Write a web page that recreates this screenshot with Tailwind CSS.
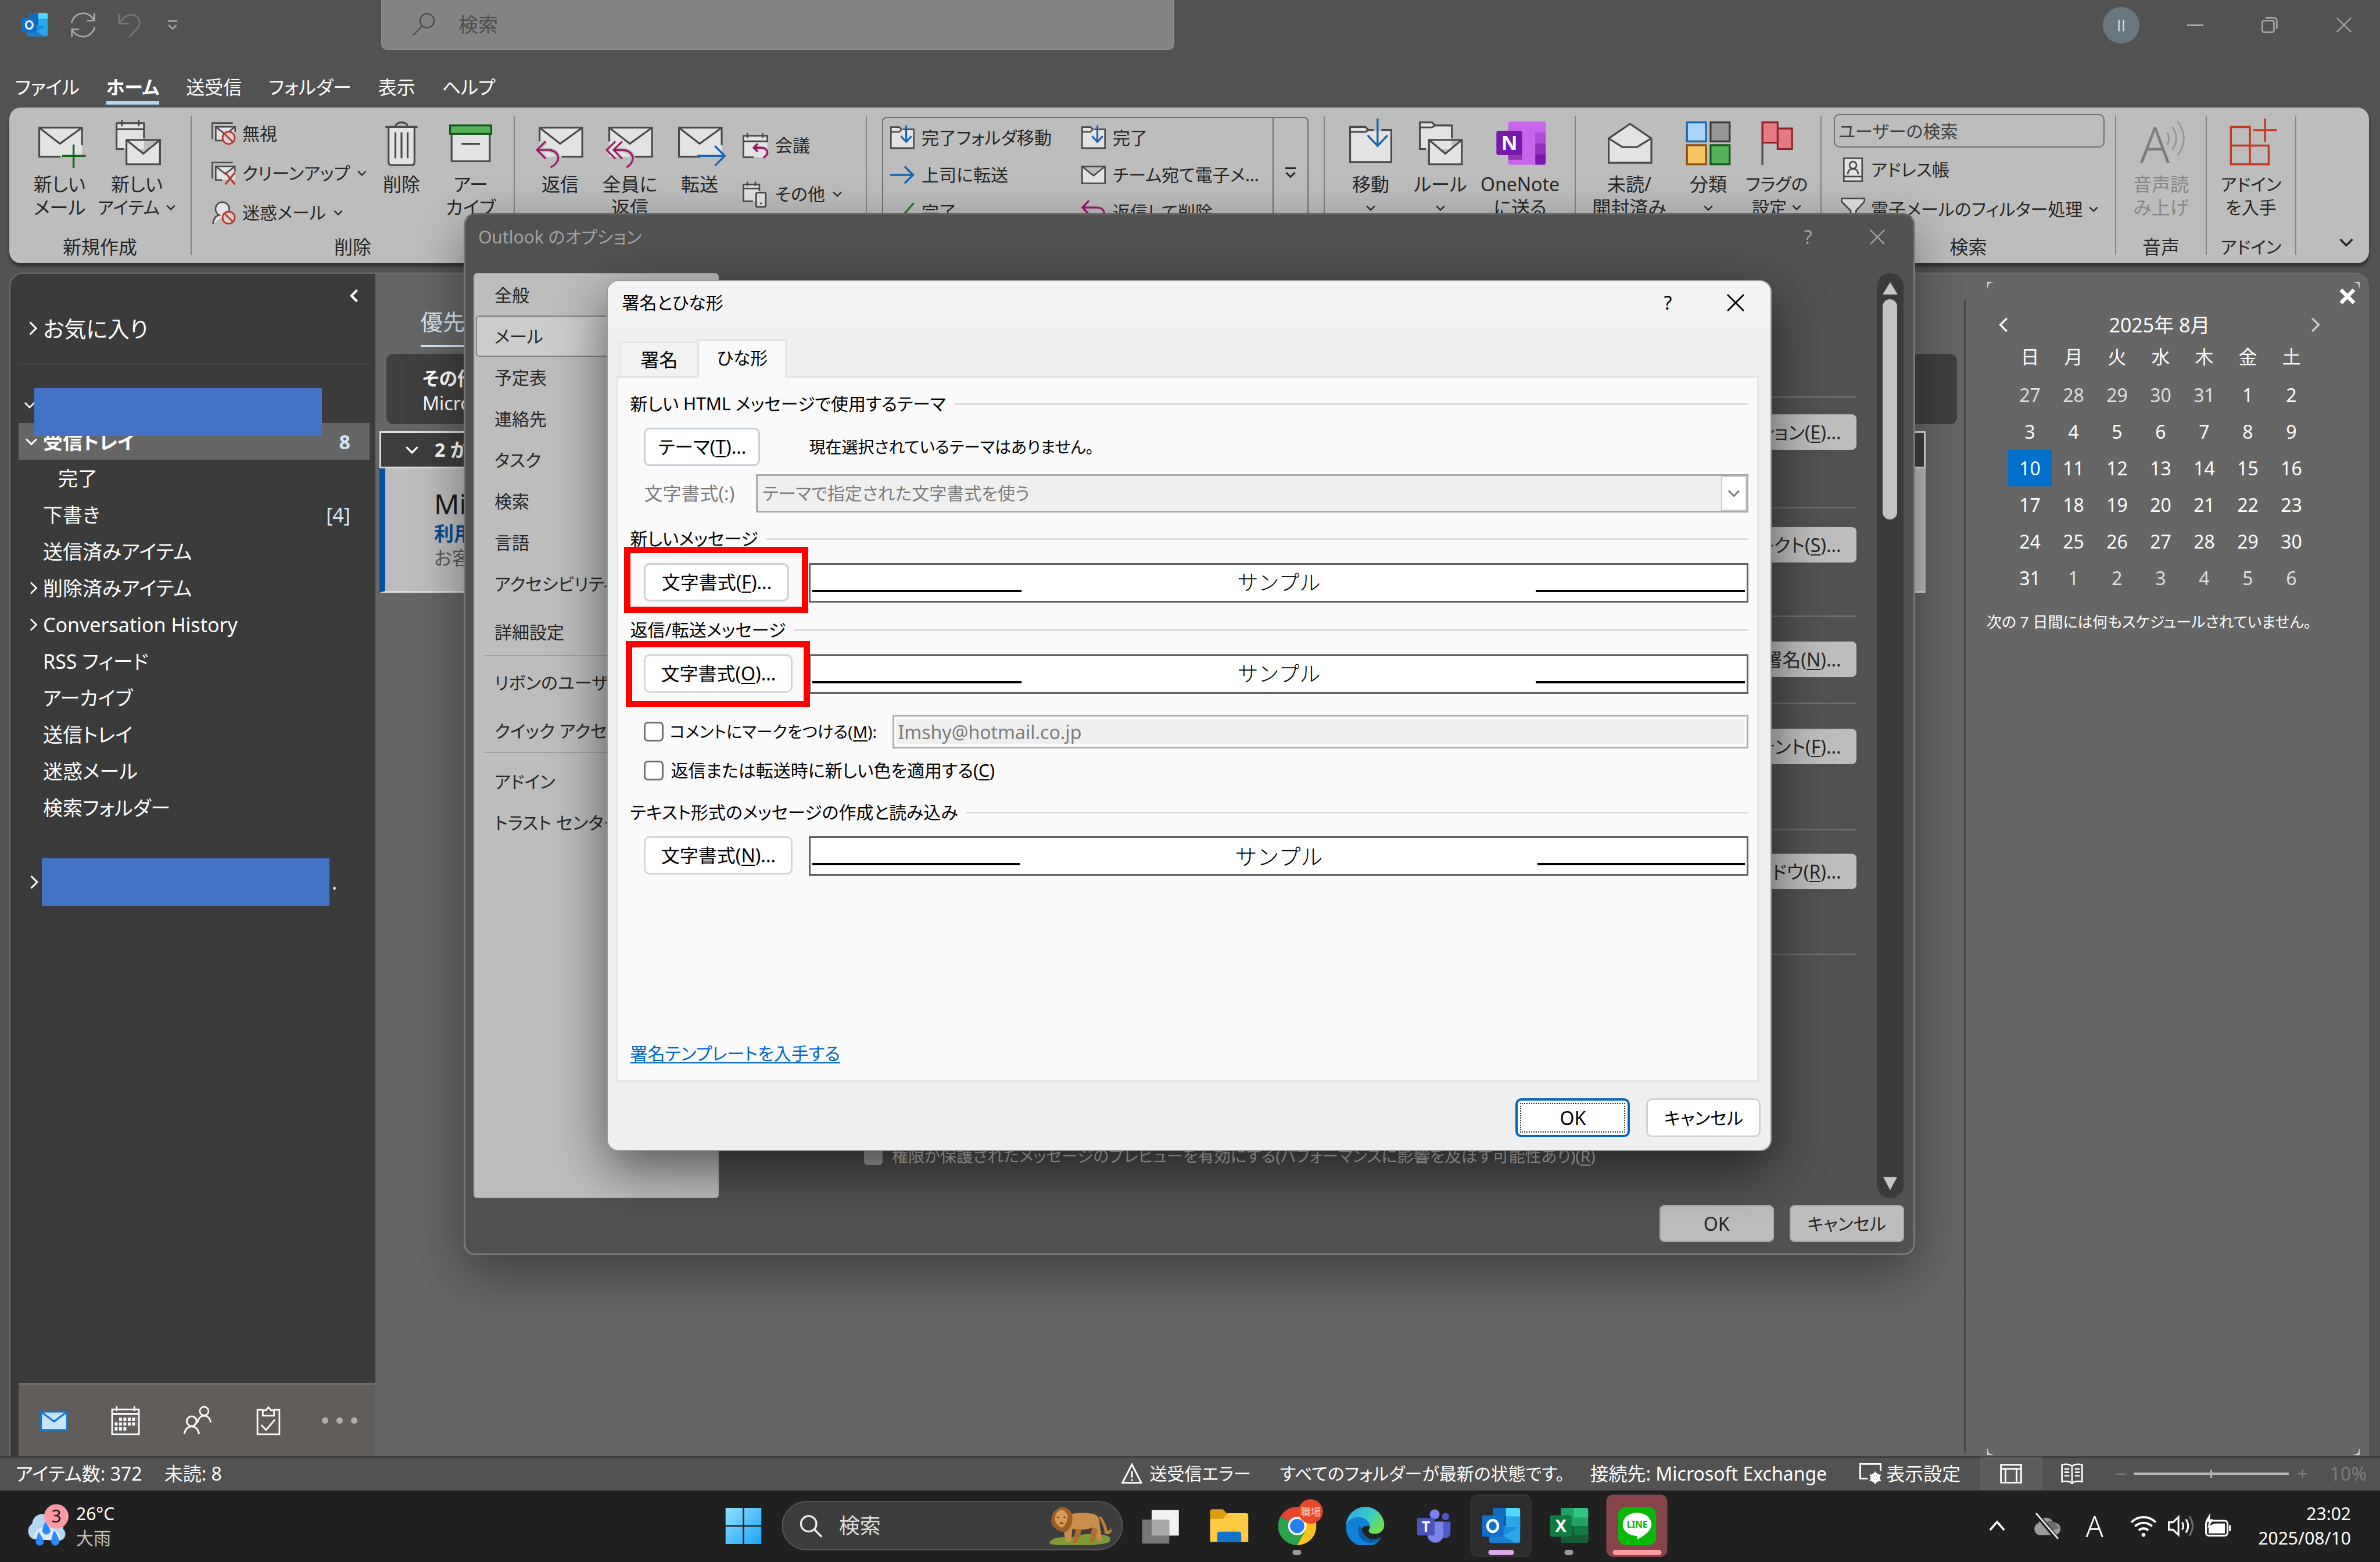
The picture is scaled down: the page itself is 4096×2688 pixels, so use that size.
<!DOCTYPE html>
<html lang="ja">
<head>
    <meta charset="UTF-8">
    <meta name="viewport" content="width=device-width, initial-scale=1.0">
    <title>受信トレイ - Outlook</title>
    <script src="https://cdn.jsdelivr.net/npm/@tailwindcss/browser@4"></script>
    <style>
        body { font-feature-settings: "palt"; }
        button, label, a, span, p { white-space: nowrap; }
        u { text-underline-offset: 4px; text-decoration-thickness: 2px; }
    </style>
</head>
<body class="relative flex min-h-screen flex-col overflow-hidden bg-[#525252] font-['Noto_Sans','Noto_Sans_CJK_JP',sans-serif] text-[32px] leading-[40px] text-[#262626]">

    <!-- Icon sprite -->
    <svg class="hidden" xmlns="http://www.w3.org/2000/svg">
        <symbol id="i-chev-down" viewBox="0 0 16 16"><path d="M2 5l6 6 6-6" fill="none" stroke="currentColor" stroke-width="2"/></symbol>
        <symbol id="i-chev-right" viewBox="0 0 16 16"><path d="M5 1l7 7-7 7" fill="none" stroke="currentColor" stroke-width="2"/></symbol>
        <symbol id="i-chev-left" viewBox="0 0 16 16"><path d="M11 1L4 8l7 7" fill="none" stroke="currentColor" stroke-width="2"/></symbol>
        <symbol id="i-close" viewBox="0 0 16 16"><path d="M1 1l14 14M15 1L1 15" fill="none" stroke="currentColor" stroke-width="1.4"/></symbol>
        <symbol id="i-more" viewBox="0 0 16 16"><path d="M2 3h12M3 8l5 5 5-5" fill="none" stroke="currentColor" stroke-width="2"/></symbol>
        <symbol id="i-env" viewBox="0 0 32 32" overflow="visible"><path d="M2.5 6h28v19h-28z" fill="#e3e3e3"/><path d="M16.5 25h-14V6h28v11.5M2.5 6L16 16.5 30.5 6" fill="none" stroke="#4a4a4a" stroke-width="1.2"/></symbol>
        <symbol id="i-env-r" viewBox="0 0 32 32" overflow="visible"><path d="M2.5 6h28v19h-28z" fill="#e3e3e3"/><path d="M17 25h13.500V6h-28v9M2.500 6L16 16.500 30.500 6" fill="none" stroke="#4a4a4a" stroke-width="1.2"/></symbol>
        <symbol id="i-ban" viewBox="0 0 10 10"><circle cx="5" cy="5" r="4.200" fill="#d9d0cf" stroke="#b8352c" stroke-width="1.100"/><path d="M2 2l6 6" stroke="#b8352c" stroke-width="1.100"/></symbol>
        <symbol id="i-msgs" viewBox="0 0 16 16"><path d="M.5 11.500V1H14" fill="none" stroke="#4a4a4a"/><path d="M2.800 3.500h12.700v9H2.800z" fill="#e3e3e3"/><path d="M7 12.500H2.800v-9h12.700V7M2.800 3.500l6.300 5 6.400-5" fill="none" stroke="#4a4a4a"/></symbol>
        <symbol id="i-movequick" viewBox="0 0 16 16" overflow="visible"><path d="M.5 1H6l1.500 2h8v12H.5z" fill="#e3e3e3"/><path d="M8.500 2.500H15.500V14.800H.5V1H6l1.500 1.500L6 4.200H.5" fill="none" stroke="#4a4a4a"/><path d="M10.500-.500V10.500M7 7l3.500 3.700L14 7" fill="none" stroke="#1765b3" stroke-width="1.200"/></symbol>
        <symbol id="i-outlook" viewBox="0 0 32 32"><path d="M9 1h21a2 2 0 012 2v25a2 2 0 01-2 2H9z" fill="#1490df"/><path d="M9 1h12v14H9z" fill="#0f6cbd"/><path d="M20 1h10a2 2 0 012 2v12H20z" fill="#50d9ff"/><path d="M9 8h12v8H9z" fill="#0a5aa8"/><path d="M20 8h12v9H20z" fill="#28a8ea"/><path d="M6 16l13 8 13-8v12a2 2 0 01-2 2H8a2 2 0 01-2-2z" fill="#28a8ea"/><path d="M6 17l22 13H8a2 2 0 01-2-2z" fill="#1b7fd1"/><rect x="0" y="7" width="18" height="18" rx="1.500" fill="#0f6fc9"/><ellipse cx="9" cy="16" rx="4.300" ry="4.800" fill="none" stroke="#fff" stroke-width="2.200"/></symbol>
        <symbol id="i-person" viewBox="0 0 16 16"><circle cx="8" cy="5" r="4" fill="none" stroke="currentColor" stroke-width="1.400"/><path d="M2 15.500C2.500 11.500 5 9.200 8 9.200s5.500 2.300 6 6.300" fill="none" stroke="currentColor" stroke-width="1.400"/></symbol>
    </svg>

    <!-- Title bar -->
    <header class="flex h-[86px] items-center text-[#a8a8a8]">
        <svg class="ml-[38px] size-[44px]"><use href="#i-outlook"/></svg>
        <button class="ml-[38px]" aria-label="更新"><svg class="size-[46px]" viewBox="0 0 18 18" fill="none" stroke="currentColor" stroke-width="1.100"><path d="M1.200 7.800A8 8 0 0116.200 5.500M16.600 1v5h-5M16.800 10.200A8 8 0 011.800 12.500M1.400 17v-5h5"/></svg></button>
        <button class="ml-[34px] text-[#777777]" aria-label="元に戻す"><svg class="size-[44px]" viewBox="0 0 18 18" fill="none" stroke="currentColor" stroke-width="1.100"><path d="M2 1v7h7M2.300 7.500C5 3.500 8 1.500 11.500 1.800c5 .600 6.500 6.200 3 10L9 17.500"/></svg></button>
        <button class="ml-[42px]" aria-label="クイック アクセス"><svg class="size-[22px]"><use href="#i-more"/></svg></button>
        <label class="ml-[348px] flex h-full w-[1365px] items-center rounded-b-[10px] border-2 border-t-0 border-[#8d8d8d] bg-[#838383] pl-[52px] text-[#4e4e4e]">
            <svg class="size-[40px]" viewBox="0 0 16 16" fill="none" stroke="currentColor" stroke-width="1"><circle cx="10" cy="5.500" r="4.800"/><path d="M6.500 9L.5 15.500"/></svg>
            <input class="ml-[39px] w-[800px] bg-transparent text-[34px] outline-none placeholder:text-[#4e4e4e]" type="text" placeholder="検索">
        </label>
        <div class="ml-auto flex items-center pr-[48px]">
            <span class="flex size-[63px] items-center justify-center rounded-full bg-[#69777f] font-['Open_Sans',sans-serif] text-[28px] text-[#dddddd]">II</span>
            <button class="ml-[82px] h-[28px] w-[28px]" aria-label="最小化"><span class="block h-[3px] bg-[#a8a8a8]"></span></button>
            <button class="ml-[100px]" aria-label="元のサイズに戻す"><svg class="size-[28px]" viewBox="0 0 12 12" fill="none" stroke="currentColor" stroke-width="1.100"><rect x=".6" y="2.800" width="8.600" height="8.600" rx="1.400"/><path d="M3 .7h6a2.300 2.300 0 012.300 2.300v6"/></svg></button>
            <button class="ml-[100px]" aria-label="閉じる"><svg class="size-[28px]"><use href="#i-close"/></svg></button>
        </div>
    </header>

    <!-- Ribbon tabs -->
    <nav class="flex h-[99px] items-start gap-[46px] pt-[42px] pl-[26px] leading-[44px] text-white">
        <a href="#">ファイル</a>
        <a href="#" class="border-b-[6px] border-[#b3d6f2] pb-0.5 font-bold">ホーム</a>
        <a href="#">送受信</a>
        <a href="#">フォルダー</a>
        <a href="#">表示</a>
        <a href="#">ヘルプ</a>
    </nav>

    <!-- Ribbon -->
    <section class="mr-[19px] ml-[16px] flex h-[268px] rounded-[20px] bg-[#bdbdbd] py-[14px] shadow-[0_5px_5px_rgba(0,0,0,0.45)]">
        <div class="flex w-[314px] flex-col border-r-2 border-[#858585]">
            <div class="flex h-[206px] shrink-0 justify-center pt-[5px] pr-[6px]">
                <button class="flex w-[133px] flex-col items-center"><svg class="mb-[9px] size-[84px]" viewBox="0 0 32 32" overflow="visible"><use href="#i-env"/><path d="M25 17v15.500M17.500 24.500H33" stroke="#12691a" stroke-width="1.300"/></svg><span>新しい<br>メール</span></button>
                <button class="flex w-[133px] flex-col items-center"><svg class="mb-[9px] size-[84px]" viewBox="0 0 32 32"><path d="M2.500 3h18v17h-18z" fill="#e3e3e3"/><path d="M7.500 20h-5V3h18v10M2.500 7h18M6 1v4M17 1v4" fill="none" stroke="#4a4a4a" stroke-width="1.200"/><path d="M9 14h22v16H9zl11 9 11-9" fill="#e3e3e3" stroke="#4a4a4a" stroke-width="1.200"/></svg><span>新しい</span><span class="flex items-center gap-[10px] text-[30px]">アイテム<svg class="size-[18px]"><use href="#i-chev-down"/></svg></span></button>
            </div>
            <span class="text-center">新規作成</span>
        </div>
        <div class="flex w-[556px] flex-col border-r-2 border-[#858585]">
            <div class="flex h-[206px] shrink-0 pl-[34px]">
                <div class="-mt-[3px] flex w-[268px] flex-col text-[30px] *:flex *:h-[68px] *:items-center">
                    <button><svg class="mr-[11px] size-[42px]" viewBox="0 0 16 16"><use href="#i-msgs"/><use href="#i-ban" x="6.500" y="6" width="9.500" height="9.500"/></svg>無視</button>
                    <button><svg class="mr-[11px] size-[42px]" viewBox="0 0 16 16"><use href="#i-msgs"/><path d="M9 7.500l6.500 8M15.500 7.500L9 15.500" stroke="#b8352c" stroke-width="1.200"/></svg>クリーンアップ<svg class="ml-[12px] size-[18px]"><use href="#i-chev-down"/></svg></button>
                    <button><svg class="mr-[11px] size-[42px]" viewBox="0 0 16 16"><path d="M1 15.500c.300-4 2-5.500 4-6A4.500 4.500 0 117.800 10" fill="#e3e3e3" stroke="#4a4a4a"/><use href="#i-ban" x="6.500" y="6.500" width="9.500" height="9.500"/></svg>迷惑メール<svg class="ml-[12px] size-[18px]"><use href="#i-chev-down"/></svg></button>
                </div>
                <button class="flex w-[118px] flex-col items-center pt-[5px]"><svg class="mb-[9px] size-[84px]" viewBox="0 0 32 32" fill="none" stroke="#4a4a4a" stroke-width="1.200"><path d="M7.500 6v22.500q0 2 2 2h13q2 0 2-2V6" fill="#e3e3e3"/><path d="M5.500 5.500h21M12 5.500c0-4 8-4 8 0M12 9v17M16 9v17M20 9v17"/></svg>削除</button>
                <button class="flex w-[120px] flex-col items-center pt-[5px]"><svg class="mb-[9px] size-[84px]" viewBox="0 0 32 32" stroke-width="1.200"><path d="M3.500 10h25v18h-25z" fill="#e3e3e3" stroke="#4a4a4a"/><path d="M2.500 4.500h27V10h-27z" fill="#55b256" stroke="#12571a"/><path d="M10 16.600h12" stroke="#4a4a4a"/></svg><span>アー<br>カイブ</span></button>
            </div>
            <span class="text-center">削除</span>
        </div>
        <div class="flex w-[606px] border-r-2 border-[#858585] pt-[5px] pl-[18px]">
            <button class="flex w-[120px] flex-col items-center"><svg class="mb-[9px] size-[84px]" viewBox="0 0 32 32" overflow="visible"><use href="#i-env-r"/><path d="M6.500 15L.8 20.600l5.700 5.700M.8 20.600H8c6 0 10 6 1.800 11.400" fill="none" stroke="#bdbdbd" stroke-width="3"/><path d="M6.500 15L.8 20.600l5.700 5.700M.8 20.600H8c7 0 10 7 1.800 11.400" fill="none" stroke="#9c1865" stroke-width="1.200"/></svg>返信</button>
            <button class="flex w-[120px] flex-col items-center"><svg class="mb-[9px] size-[84px]" viewBox="0 0 32 32" overflow="visible"><use href="#i-env-r"/><path d="M5.300 20.600H11c7 0 10 7 2.800 11.400" fill="none" stroke="#bdbdbd" stroke-width="3"/><path d="M6.500 15L.8 20.600l5.700 5.700M11 15l-5.700 5.600L11 26.300M5.300 20.600H11c7 0 10 7 2.800 11.400" fill="none" stroke="#9c1865" stroke-width="1.200"/></svg><span>全員に<br>返信</span></button>
            <button class="flex w-[120px] flex-col items-center"><svg class="mb-[9px] size-[84px]" viewBox="0 0 32 32" overflow="visible"><use href="#i-env"/><path d="M14.500 24.500H32M26 18l6.500 6.500L26 31" fill="none" stroke="#1765b3" stroke-width="1.300"/></svg>転送</button>
            <div class="ml-[14px] flex flex-col pt-[4px] text-[30px] *:flex *:h-[84px] *:items-center">
                <button><svg class="mr-[12px] size-[44px]" viewBox="0 0 16 16" overflow="visible"><path d="M.5 2h15v13.500H.5z" fill="#e3e3e3"/><path d="M7 15.500H.5V2h15v4M.5 5.500h15M3 .3V3.500M12.500.3V3.500" fill="none" stroke="#4a4a4a"/><path d="M9.500 7L7 9.500 9.500 12M7 9.500h4c5 0 6 4 2 6.200" fill="none" stroke="#9c1865" stroke-width="1.300"/></svg>会議</button>
                <button><svg class="mr-[12px] size-[44px]" viewBox="0 0 16 16" overflow="visible"><path d="M.5 2h10v10.500H.5z" fill="#e3e3e3"/><path d="M6.500 12.500h-6V2h10v4M.5 4.500h10M3 .3V3M8 .3V3" fill="none" stroke="#4a4a4a"/><rect x="8.500" y="7" width="6" height="9" rx=".8" fill="#e3e3e3" stroke="#4a4a4a"/><circle cx="11.500" cy="13.800" r=".6" fill="#4a4a4a"/></svg>その他<svg class="ml-[12px] size-[18px]"><use href="#i-chev-down"/></svg></button>
            </div>
        </div>
        <div class="flex w-[788px] border-r-2 border-[#858585] px-[26px] pt-[2px]">
            <div class="flex flex-1 overflow-hidden rounded-[8px] border-2 border-[#707070]">
                <div class="grid flex-1 grid-cols-2 content-start gap-y-[1px] overflow-hidden border-r-2 border-[#707070] pt-[2px] pl-[12px] text-[30px] *:flex *:h-[63px] *:items-center">
                    <button><svg class="mr-[12px] size-[42px]"><use href="#i-movequick"/></svg>完了フォルダ移動</button>
                    <button><svg class="mr-[12px] size-[42px]"><use href="#i-movequick"/></svg>完了</button>
                    <button><svg class="mr-[12px] size-[42px]" viewBox="0 0 16 16" fill="none" stroke="#1765b3" stroke-width="1.300"><path d="M0 8h15M9.500 2.500L15 8l-5.500 5.500"/></svg>上司に転送</button>
                    <button><svg class="mr-[12px] size-[42px] shrink-0" viewBox="0 0 16 16"><path d="M.5 2.500h15v11H.5zl7.500 6 7.500-6" fill="#e3e3e3" stroke="#4a4a4a"/></svg>チーム宛て電子メ…</button>
                    <button><svg class="mr-[12px] size-[42px]" viewBox="0 0 16 16" fill="none" stroke="#2c7a2c" stroke-width="1.300"><path d="M0 9l5 5L15.500 2"/></svg>完了</button>
                    <button><svg class="mr-[12px] size-[42px]" viewBox="0 0 16 16" fill="none" stroke="#9c1865" stroke-width="1.300"><path d="M5 .5L.8 5 5 9.500M.8 5H10c7 0 6 8 1 10"/></svg>返信して削除</button>
                </div>
                <button class="flex w-[58px] justify-center pt-[82px]" aria-label="クイック操作"><svg class="size-[24px]"><use href="#i-more"/></svg></button>
            </div>
        </div>
        <div class="flex w-[432px] border-r-2 border-[#858585] pt-[5px] pl-[19px]">
            <button class="flex w-[120px] flex-col items-center"><svg class="mb-[9px] size-[84px]" viewBox="0 0 32 32"><path d="M2.500 5.500H13L15 8h14.500v20.500h-27z" fill="#e3e3e3"/><path d="M18 7.500h-3.500l-2-2h-10v23h27v-21H23M2.500 8.700h10l2-1.200" fill="none" stroke="#4a4a4a" stroke-width="1.200"/><path d="M20.500 0v18M14 11l6.500 7 6.500-7" fill="none" stroke="#1765b3" stroke-width="1.300"/></svg>移動<svg class="mt-[12px] size-[18px]"><use href="#i-chev-down"/></svg></button>
            <button class="flex w-[120px] flex-col items-center"><svg class="mb-[9px] size-[84px]" viewBox="0 0 32 32"><path d="M2.500 2.500h8l2 2h11V20h-21z" fill="#e3e3e3"/><path d="M6.500 20h-4V2.500h8l2 2h11V13M2.500 5.800h8l2-1.300" fill="none" stroke="#4a4a4a" stroke-width="1.200"/><path d="M8.500 14h21.500v16H8.500zl10.700 9L30 14" fill="#e3e3e3" stroke="#4a4a4a" stroke-width="1.200"/></svg>ルール<svg class="mt-[12px] size-[18px]"><use href="#i-chev-down"/></svg></button>
            <button class="flex w-[154px] flex-col items-center"><svg class="mb-[9px] size-[84px]" viewBox="0 0 32 32" overflow="visible"><rect x="8.300" y="2" width="24.500" height="28.300" rx="1.500" fill="#c965eb"/><path d="M26 9h6.800v7.200H26z" fill="#ae4bd5"/><path d="M26 16.200h6.800v7.100H26z" fill="#9332bf"/><path d="M26 23.300h6.800v5.500q0 1.500-1.500 1.500H26z" fill="#7719aa"/><path d="M8.300 23h9v4h-9z" fill="#8e3bb0"/><rect x=".5" y="8" width="16.800" height="16" rx="1.500" fill="#7719aa"/><text x="9" y="20.500" text-anchor="middle" font-size="13" font-weight="700" fill="#fff">N</text></svg><span>OneNote<br>に送る</span></button>
        </div>
        <div class="flex w-[423px] border-r-2 border-[#858585] pt-[5px] pl-[12px]">
            <button class="flex w-[160px] flex-col items-center"><svg class="mb-[9px] size-[84px]" viewBox="0 0 32 32" fill="#e3e3e3" stroke="#4a4a4a" stroke-width="1.200"><path d="M2.500 13v16h28V13L16.500 3.500z"/><path d="M2.500 13l9 5.700h9.500l9.500-5.700" fill="none"/></svg><span>未読/<br>開封済み</span></button>
            <button class="flex w-[112px] flex-col items-center"><svg class="mb-[9px] size-[84px]" viewBox="0 0 32 32" stroke-width="1.200"><path d="M2 2.500h12.500V15H2z" fill="#a9d5fa" stroke="#1765b3"/><path d="M17.500 2.500H30V15H17.500z" fill="#969696" stroke="#3a3a3a"/><path d="M2 17.500h12.500V30H2z" fill="#f7c464" stroke="#8a4a14"/><path d="M17.500 17.500H30V30H17.500z" fill="#55b256" stroke="#12571a"/></svg>分類<svg class="mt-[12px] size-[18px]"><use href="#i-chev-down"/></svg></button>
            <button class="flex w-[124px] flex-col items-center"><svg class="mb-[9px] size-[84px]" viewBox="0 0 32 32"><path d="M6.500 16v14.500" stroke="#4a4a4a" stroke-width="1.200"/><path d="M6.500 2.500h10v13.300h-10zM16.500 6.500H26V20h-9.500z" fill="#e37b80" stroke="#8e2226" stroke-width="1.200"/></svg><span class="text-[30px]">フラグの</span><span class="flex items-center gap-[8px] text-[30px]">設定<svg class="size-[18px]"><use href="#i-chev-down"/></svg></span></button>
        </div>
        <div class="flex w-[507px] flex-col border-r-2 border-[#858585]">
            <div class="flex h-[206px] shrink-0 flex-col pr-[18px] pl-[21px] text-[30px]">
                <input class="-mt-[3px] h-[58px] w-full shrink-0 rounded-[10px] border-2 border-[#707070] pl-[6px] text-[#404040] outline-none placeholder:text-[#404040]" type="text" placeholder="ユーザーの検索" aria-label="ユーザーの検索">
                <button class="flex h-[72px] items-center pt-[4px] pl-[12px]"><svg class="mr-[10px] size-[42px]" viewBox="0 0 16 16" fill="#e3e3e3" stroke="#4a4a4a"><path d="M2 .5h12v15H2zM2 12.500h12"/><circle cx="8" cy="5" r="2.300"/><path d="M4.500 11c.3-2.500 1.500-3.600 3.500-3.600s3.200 1.100 3.500 3.600" fill="none"/></svg>アドレス帳</button>
                <button class="flex h-[68px] items-center pl-[12px]"><svg class="mr-[10px] size-[42px] shrink-0" viewBox="0 0 16 16" fill="#e3e3e3" stroke="#4a4a4a"><path d="M.5 1h15v2L10 9v6.500H6.500V9L.5 3z"/></svg>電子メールのフィルター処理<svg class="ml-[10px] size-[18px] shrink-0"><use href="#i-chev-down"/></svg></button>
            </div>
            <span class="text-center">検索</span>
        </div>
        <div class="flex w-[156px] flex-col border-r-2 border-[#858585]">
            <button class="flex h-[206px] shrink-0 flex-col items-center pt-[5px] text-[#878787]"><svg class="mb-[9px] size-[84px]" viewBox="0 0 32 32" overflow="visible"><text x="12" y="29" text-anchor="middle" font-size="32" font-weight="300" fill="#7b7b7b">A</text><path d="M20 9q2.500 4 0 8M23.500 5.500q5 7.500 0 15M27 2q8 11 0 22" fill="none" stroke="#969696" stroke-width="1.100"/></svg><span>音声読<br>み上げ</span></button>
            <span class="text-center">音声</span>
        </div>
        <div class="flex w-[154px] flex-col border-r-2 border-[#858585]">
            <button class="flex h-[206px] shrink-0 flex-col items-center pt-[5px]"><svg class="mb-[9px] size-[84px]" viewBox="0 0 32 32" overflow="visible" fill="none" stroke="#c3391f" stroke-width="1.300"><path d="M2.800 5.500h12.500V30H2.800zM2.800 17.700h24.800V30H15.300M25.200 0v15.500M17.500 7.600H33M27.600 17.700V30"/></svg><span class="text-[30px]">アドイン<br>を入手</span></button>
            <span class="text-center text-[30px]">アドイン</span>
        </div>
        <button class="mt-auto ml-auto pr-[25px] pb-[8px]" aria-label="リボンを折りたたむ"><svg class="size-[28px]"><use href="#i-chev-down"/></svg></button>
    </section>

    <!-- Folder pane, message list and calendar -->
    <main class="mt-[16px] mr-[19px] ml-[16px] flex flex-1 overflow-hidden rounded-t-[24px] border-t-2 border-l-2 border-[#6e6e6e] bg-[#666666] text-white">
        <aside class="flex w-[628px] flex-col bg-[#3b3b3b] text-[34px]">
            <div class="flex justify-end pt-[27px] pr-[26px]"><button aria-label="折りたたむ"><svg class="size-[22px]" viewBox="0 0 16 16"><path d="M12 1L5 8l7 7" fill="none" stroke="currentColor" stroke-width="3"/></svg></button></div>
            <a href="#" class="mt-[20px] ml-[26px] flex h-[50px] items-center gap-[6px] text-[38px]"><svg class="size-[24px]"><use href="#i-chev-right"/></svg>お気に入り</a>
            <div class="mt-[35px] mr-[10px] ml-[14px] border-t-2 border-[#454545]"></div>
            <ul class="mt-[38px] mr-[10px] ml-[14px] *:flex *:h-[63px] *:items-center">
                <li class="relative"><svg class="ml-[8px] size-[22px]"><use href="#i-chev-down"/></svg><span class="absolute top-[3px] left-[27px] h-[82px] w-[495px] bg-[#4472c7]"></span></li>
                <li class="bg-[#666666] pr-[33px] font-bold"><svg class="mr-[8px] ml-[10px] size-[24px]"><use href="#i-chev-down"/></svg>受信トレイ<span class="ml-auto text-[#d3e6f5]">8</span></li>
                <li class="pl-[68px]">完了</li>
                <li class="pr-[33px] pl-[42px]">下書き<span class="ml-auto text-[#d3e6f5]">[4]</span></li>
                <li class="pl-[42px]">送信済みアイテム</li>
                <li><svg class="mr-[6px] ml-[14px] size-[22px]"><use href="#i-chev-right"/></svg>削除済みアイテム</li>
                <li><svg class="mr-[6px] ml-[14px] size-[22px]"><use href="#i-chev-right"/></svg>Conversation History</li>
                <li class="pl-[42px]">RSS フィード</li>
                <li class="pl-[42px]">アーカイブ</li>
                <li class="pl-[42px]">送信トレイ</li>
                <li class="pl-[42px]">迷惑メール</li>
                <li class="pl-[42px]">検索フォルダー</li>
            </ul>
            <div class="mt-[56px] ml-[28px] flex h-[82px] items-center"><svg class="size-[24px]"><use href="#i-chev-right"/></svg><span class="ml-[2px] h-full w-[495px] bg-[#4472c7]"></span><span class="ml-[4px]">.</span></div>
            <div class="mt-auto ml-[14px] flex h-[126px] items-center border-t-[3px] border-[#6e6e6e] bg-[#605d5b] *:flex *:w-[123px] *:justify-center">
                <button aria-label="メール"><svg class="h-[36px] w-[48px]" viewBox="0 0 18 13"><path d="M.6.600h16.800v11.800H.6z" fill="#c9e3f7" stroke="#1277cf" stroke-width="1.200"/><path d="M1 1l8 6 8-6" fill="none" stroke="#1277cf" stroke-width="1.200"/></svg></button>
                <button aria-label="予定表"><svg class="size-[50px]" viewBox="0 0 18 18" fill="none" stroke="#fff" stroke-width="1"><path d="M.7 2h16.600v15.300H.7zM.7 4.800h16.600M3.500 0v3M14.500 0v3"/><path d="M5 8h11M2.300 11h13.700M2.300 14h8" stroke-width="2" stroke-dasharray="1.800 .9"/></svg></button>
                <button aria-label="連絡先"><svg class="size-[52px]" viewBox="0 0 20 20"><use href="#i-person" x="9" y="0" width="11.500" height="11.500"/><use href="#i-person" x="0" y="6" width="13" height="13.500"/></svg></button>
                <button aria-label="タスク"><svg class="h-[50px] w-[42px]" viewBox="0 0 15 18" fill="none" stroke="#fff" stroke-width="1"><path d="M4 2.200H.7v15.100h13.600V2.200H11M4 5.800V2.500h2L7.500.600 9 2.500h2v3.300zM3 11.500l3 3.200 5.500-6.500"/></svg></button>
                <button class="gap-[14px]" aria-label="その他"><i class="size-[11px] rounded-full bg-[#adadad]"></i><i class="size-[11px] rounded-full bg-[#adadad]"></i><i class="size-[11px] rounded-full bg-[#adadad]"></i></button>
            </div>
        </aside>

        <section class="flex flex-1 flex-col pr-[12px] pl-[7px]">
            <div class="mt-[57px] ml-[71px] flex"><a href="#" class="border-b-[3px] border-[#d3e6f5] pb-[16px] text-[38px] leading-[50px] text-[#d3e6f5]">優先</a></div>
            <div class="mt-[12px] ml-[12px] h-[121px] rounded-[12px] bg-[#404040] pt-[20px] pl-[62px] leading-[43px]"><p class="font-bold">その他</p><p>Microsoft</p></div>
            <div class="mt-[12px] mr-[54px] flex h-[64px] items-center border-[3px] border-[#dcdcdc] bg-[#3e3e3e] font-bold"><svg class="mr-[26px] ml-[40px] size-[26px]"><use href="#i-chev-down"/></svg>2 か月前</div>
            <article class="mr-[54px] h-[214px] border-b-[3px] border-l-[10px] border-[#dcdcdc] border-l-[#0550a0] bg-[#bdbdbd] pt-[31px] pl-[84px]">
                <p class="text-[48px] leading-[60px] text-[#1a1a1a]">Microsoft</p>
                <p class="text-[34px] leading-[42px] font-bold text-[#064a94]">利用規約</p>
                <p class="text-[32px] leading-[42px] text-[#5a5a5a]">お客様</p>
            </article>
        </section>

        <!-- To-do bar calendar -->
        <section class="relative mt-[46px] mb-[6px] w-[697px] border-l-[3px] border-[#484848]">
            <svg class="absolute -top-[32px] left-[37px] size-[12px]" viewBox="0 0 12 12"><path d="M0 0h12L3 3 0 12z" fill="#cfcfcf"/></svg>
            <svg class="absolute -top-[32px] right-[16px] size-[12px]" viewBox="0 0 12 12"><path d="M12 0H0l9 3 3 9z" fill="#cfcfcf"/></svg>
            <svg class="absolute -bottom-[4px] left-[37px] size-[12px]" viewBox="0 0 12 12"><path d="M0 12h12L3 9 0 0z" fill="#cfcfcf"/></svg>
            <svg class="absolute -bottom-[4px] right-[16px] size-[12px]" viewBox="0 0 12 12"><path d="M12 12H0l9-3 3-9z" fill="#cfcfcf"/></svg>
            <button class="absolute -top-[22px] right-[22px]" aria-label="閉じる"><svg class="size-[30px]" viewBox="0 0 16 16"><path d="M2 2l12 12M14 2L2 14" stroke="#fff" stroke-width="3.500"/></svg></button>
            <div class="flex items-center justify-between pt-[22px] pr-[80px] pl-[53px] text-[34px]">
                <button aria-label="前の月"><svg class="size-[26px]"><use href="#i-chev-left"/></svg></button>
                <span>2025年 8月</span>
                <button aria-label="次の月"><svg class="size-[26px] text-[#cfcfcf]"><use href="#i-chev-right"/></svg></button>
            </div>
            <table class="ml-[73px] w-[525px] table-fixed text-center">
                <thead><tr class="h-[69px] *:font-normal"><th>日</th><th>月</th><th>火</th><th>水</th><th>木</th><th>金</th><th>土</th></tr></thead>
                <tbody class="*:h-[63px]">
                    <tr><td class="text-[#dedede]">27</td><td class="text-[#dedede]">28</td><td class="text-[#dedede]">29</td><td class="text-[#dedede]">30</td><td class="text-[#dedede]">31</td><td>1</td><td>2</td></tr>
                    <tr><td>3</td><td>4</td><td>5</td><td>6</td><td>7</td><td>8</td><td>9</td></tr>
                    <tr><td class="bg-[#0070cc]">10</td><td>11</td><td>12</td><td>13</td><td>14</td><td>15</td><td>16</td></tr>
                    <tr><td>17</td><td>18</td><td>19</td><td>20</td><td>21</td><td>22</td><td>23</td></tr>
                    <tr><td>24</td><td>25</td><td>26</td><td>27</td><td>28</td><td>29</td><td>30</td></tr>
                    <tr><td>31</td><td class="text-[#dedede]">1</td><td class="text-[#dedede]">2</td><td class="text-[#dedede]">3</td><td class="text-[#dedede]">4</td><td class="text-[#dedede]">5</td><td class="text-[#dedede]">6</td></tr>
                </tbody>
            </table>
            <p class="mt-[24px] ml-[36px] text-[26px]">次の 7 日間には何もスケジュールされていません。</p>
        </section>
    </main>

    <!-- Status bar -->
    <footer class="flex h-[59px] items-center border-t-[3px] border-[#3e3e3e] pr-[23px] pb-[3px] pl-[27px] text-white">
        <span>アイテム数: 372</span><span class="ml-[38px]">未読: 8</span>
        <div class="ml-auto flex h-[56px] items-center">
            <svg class="mr-[12px] size-[36px]" viewBox="0 0 16 16" fill="none" stroke="#fff" stroke-width="1.300"><path d="M8 1L.8 15h14.400zM8 6v5M8 12.200v1.500"/></svg><span class="text-[30px]">送受信エラー</span>
            <span class="ml-[50px] text-[30px]">すべてのフォルダーが最新の状態です。</span>
            <span class="ml-[44px]">接続先: Microsoft Exchange</span>
            <button class="ml-[56px] flex items-center"><svg class="mr-[8px] size-[38px]" viewBox="0 0 16 16" fill="none" stroke="#fff" stroke-width="1.200"><path d="M6 11.500H.6V1h14.800v5"/><circle cx="11.500" cy="11" r="2.600" stroke-width="1.800"/><path d="M11.500 6.500v9M7.600 8.800l7.800 4.400M15.400 8.800l-7.800 4.400"/></svg>表示設定</button>
            <button class="ml-[34px] flex h-full w-[106px] items-center justify-center bg-[#5d5d5d]" aria-label="標準"><svg class="size-[38px]" viewBox="0 0 16 16" fill="none" stroke="#fff" stroke-width="1.200"><path d="M.7 1.500h14.600v13H.7zM.7 4.500h14.600M4 4.500v10M12 4.500v10"/></svg></button>
            <button class="ml-[33px]" aria-label="閲覧"><svg class="size-[38px]" viewBox="0 0 16 16" fill="none" stroke="#fff" stroke-width="1.100"><path d="M8 2.500C6 1 3 1 .7 1.500v12.300C3 13.300 6 13.300 8 15c2-1.700 5-1.700 7.300-1.200V1.500C13 1 10 1 8 2.500V15M2.500 4.500h3.500M2.500 7h3.500M2.500 9.500h3.500M10 4.500h3.500M10 7h3.500M10 9.500h3.500"/></svg></button>
            <span class="ml-[55px] text-[#7c7c7c]">−</span>
            <input class="mx-[14px] h-[20px] w-[267px] appearance-none bg-transparent [&::-webkit-slider-runnable-track]:h-[4px] [&::-webkit-slider-runnable-track]:bg-[#b5b5b5] [&::-webkit-slider-thumb]:-mt-[5px] [&::-webkit-slider-thumb]:h-[14px] [&::-webkit-slider-thumb]:w-[3px] [&::-webkit-slider-thumb]:appearance-none [&::-webkit-slider-thumb]:bg-[#b5b5b5]" type="range" value="50" aria-label="ズーム">
            <span class="text-[#7c7c7c]">+</span>
            <span class="ml-[38px] text-[#7c7c7c]">10%</span>
        </div>
    </footer>

    <!-- Windows taskbar -->
    <footer class="relative flex h-[123px] items-center bg-[#202020] pb-[2px] text-white">
        <div class="ml-[45px] flex items-center">
            <svg class="size-[76px]" viewBox="0 0 30 30"><path d="M5 24a6 6 0 01-1-10.500A7 7 0 0116 9a6.500 6.500 0 019 8 4.500 4.500 0 01-3 8z" fill="#b5d6f3"/><path d="M5 24c0-6 4-9 10-8s9 4 8 9z" fill="#dbeafa"/><path d="M13 12q3.500 5 3.500 6.500a2.800 2.800 0 01-5.500 0Q11 16 13 12zM8.500 19q3.500 5 3.500 7a2.800 2.800 0 01-5.500 0q0-2 2-7zM19 18q3.500 5 3.500 8a2.800 2.800 0 01-5.500 0q0-3 2-8z" fill="#2a8bff"/><circle cx="20.500" cy="8.500" r="8.300" fill="#ff99a4"/><text x="20.500" y="12.800" text-anchor="middle" font-size="12" fill="#1a1a1a">3</text></svg>
            <div class="ml-[10px] text-[30px] leading-[42px]"><p>26°C</p><p class="text-[#c4c4c4]">大雨</p></div>
        </div>
        <div class="absolute left-[50.35%] flex -translate-x-1/2 items-center">
            <button class="mr-[35px]" aria-label="スタート"><svg class="size-[62px]" viewBox="0 0 24 24"><defs><linearGradient id="win" x1="0" y1="0" x2="1" y2="1"><stop offset="0" stop-color="#8fe0ff"/><stop offset="1" stop-color="#1aa4f7"/></linearGradient></defs><path d="M0 0h11.500v11.500H0zM12.500 0H24v11.500H12.500zM0 12.500h11.500V24H0zM12.500 12.500H24V24H12.500z" fill="url(#win)"/></svg></button>
            <label class="mr-[7px] flex h-[85px] w-[587px] items-center rounded-full border-2 border-[#555555] bg-[#3d3d3d] pl-[28px]">
                <svg class="size-[40px]" viewBox="0 0 16 16" fill="none" stroke="#e8e8e8" stroke-width="1.400"><circle cx="6.500" cy="6.500" r="5.300"/><path d="M10.500 10.500l5 5"/></svg>
                <input class="ml-[28px] w-[340px] bg-transparent text-[36px] outline-none placeholder:text-[#dddddd]" type="text" placeholder="検索">
                <svg class="ml-[18px] h-[66px] w-[114px] shrink-0" viewBox="0 0 114 66"><path d="M4 62q6-12 40-10 20-8 50-4 20 2 14 12-10 6-50 6-50 2-54-4z" fill="#7f9a35"/><path d="M34 14q22-6 46-2 12 4 11 18l4 28h-8l-7-22q-18 6-36 2l-2 22h-9l-6-28z" fill="#c98d4c"/><path d="M50 38l-6 24h8l9-24zM78 34l-4 26h8l6-20z" fill="#ab6f35"/><path d="M26 0q16 2 18 16 2 18-12 28-18-2-24-16Q6 6 26 0z" fill="#9a5f22"/><path d="M24 5q11 2 12 12-1 14-10 19-9-3-12-13 0-14 10-18z" fill="#d69b58"/><path d="M18 18h3M29 18h3M23 28h5" stroke="#4a2a10" stroke-width="2"/><path d="M90 18q8 14 10 28 6 4 12-4l-2-6q-2 8-6 4-3-14-11-24z" fill="#c07f35"/></svg>
            </label>
            <div class="flex *:relative *:flex *:h-[107px] *:w-[117px] *:items-center *:justify-center">
                <button aria-label="タスク ビュー"><svg class="size-[66px]" viewBox="0 0 24 24"><path d="M6 2h17v16H6z" fill="#f2f2f2"/><path d="M0 8h17v15H0z" fill="#777777"/><path d="M6 8h11v10H6z" fill="#a8a8a8"/></svg></button>
                <button aria-label="エクスプローラー"><svg class="size-[66px]" viewBox="0 0 24 24"><path d="M0 3q0-1.500 1.500-1.500H8L10.500 4v4H0z" fill="#dc9c12"/><path d="M0 7.500h8L11 4h11.500Q24 4 24 5.500V22H0z" fill="#ffcb45"/><path d="M4.500 22v-5q0-1.500 1.500-1.500h12q1.500 0 1.500 1.500v5z" fill="#1173c7"/></svg></button>
                <button aria-label="Chrome"><svg class="size-[66px]" viewBox="0 0 48 48"><path d="M24 24L3.200 12A24 24 0 0144.800 12z" fill="#e8452f"/><path d="M3.200 12A24 24 0 0024 48l10.400-18L24 24z" fill="#2ba24c"/><path d="M44.800 12A24 24 0 0124 48l10.400-18L24 12z" fill="#fcc31e"/><path d="M24 13h21.300L24 12z" fill="#e8452f"/><circle cx="24" cy="24" r="11.500" fill="#fff"/><circle cx="24" cy="24" r="9" fill="#2a7df0"/></svg><span class="absolute top-[8px] right-[14px] flex size-[42px] items-center justify-center rounded-full bg-[#e64a2b] text-[17px] leading-none text-[#ffd3c8]">職場</span><i class="absolute bottom-[3px] h-[9px] w-[15px] rounded-full bg-[#9c9c9c]"></i></button>
                <button aria-label="Edge"><svg class="size-[66px]" viewBox="0 0 48 48"><defs><linearGradient id="edg" x1="0" y1="0" x2="1" y2=".6"><stop offset="0" stop-color="#2aa8e8"/><stop offset=".6" stop-color="#3ccbc5"/><stop offset="1" stop-color="#6fe04a"/></linearGradient></defs><path d="M24 0a24 24 0 0124 22c0 8-6 12-12 12s-9-3-7-6c3-5-1-12-9-12C11 16 3 20 0 25A24 24 0 0124 0z" fill="url(#edg)"/><path d="M0 25c0-7 8-13 18-12 7 1 13 7 12 12-10-4-14 6-8 13 5 6 14 6 22 1A24 24 0 010 25z" fill="#1182d8"/><path d="M17 23c-5 10 2 22 15 22 6-1 10-4 12-7-7 4-16 3-20-2-4-4-4-9-7-13z" fill="#0c59a4"/></svg></button>
                <button aria-label="Teams"><svg class="size-[60px]" viewBox="0 0 24 24"><circle cx="13" cy="4" r="3.400" fill="#7b83eb"/><circle cx="20.500" cy="5.500" r="2.500" fill="#5059c9"/><path d="M17 9h7v8a4 4 0 01-7 2z" fill="#5059c9"/><path d="M8 9h11v9a5.500 5.500 0 01-11 0z" fill="#7b83eb"/><rect x="1" y="6.500" width="12" height="12" rx="1" fill="#4b53bc"/><text x="7" y="16" text-anchor="middle" font-size="10" font-weight="700" fill="#fff">T</text></svg></button>
                <button aria-label="Outlook"><span class="absolute inset-x-[6px] inset-y-0 rounded-[12px] border-2 border-[#343434] bg-[#2c2c2c]"></span><svg class="relative size-[66px]"><use href="#i-outlook"/></svg><i class="absolute bottom-[3px] h-[9px] w-[44px] rounded-full bg-[#dfa8ea]"></i></button>
                <button aria-label="Excel"><svg class="size-[66px]" viewBox="0 0 32 32"><path d="M9 1h21q2 0 2 2v25q0 2-2 2H11q-2 0-2-2z" fill="#21a366"/><path d="M20 1h10q2 0 2 2v6H20z" fill="#33c481"/><path d="M9 16h12v14H11q-2 0-2-2z" fill="#185c37"/><path d="M20 16h12v7H20z" fill="#107c41"/><path d="M20 23h12v5q0 2-2 2H20z" fill="#185c37"/><rect x="0" y="7" width="18" height="18" rx="1.500" fill="#107c41"/><text x="9" y="20.800" text-anchor="middle" font-size="14" font-weight="700" fill="#fff">X</text></svg><i class="absolute bottom-[3px] h-[9px] w-[15px] rounded-full bg-[#9c9c9c]"></i></button>
                <button aria-label="LINE"><span class="absolute inset-x-[6px] inset-y-0 rounded-[12px] bg-[#85454b]"></span><svg class="relative size-[66px]" viewBox="0 0 32 32"><rect width="32" height="32" rx="7" fill="#06b906"/><path d="M16 5c7 0 12 4.300 12 9.800 0 5-5.500 9-12 12.500.3-2 .5-3-1-3C8 23.500 4 19.600 4 14.800 4 9.300 9 5 16 5z" fill="#fff"/><text x="16" y="17.600" text-anchor="middle" font-size="7.500" font-weight="700" fill="#06b906">LINE</text></svg><i class="absolute bottom-[3px] h-[9px] w-[84px] rounded-full bg-[#ff99a4]"></i></button>
            </div>
        </div>
        <div class="ml-auto flex items-center pr-[50px]">
            <svg class="size-[28px]" viewBox="0 0 16 16"><path d="M1 12l7-8 7 8" fill="none" stroke="#fff" stroke-width="2"/></svg>
            <svg class="ml-[47px] size-[48px]" viewBox="0 0 24 24"><path d="M6 20a5.500 5.500 0 01-1-10.500A7 7 0 0118 9a5.500 5.500 0 011 11z" fill="#9b9b9b"/><path d="M11 11q3-6 8-2l4 5-7 2z" fill="#6c6c6c"/><path d="M3 1l18 22" stroke="#202020" stroke-width="4"/><path d="M3 1l19 22" stroke="#e8e8e8" stroke-width="1.400"/></svg>
            <span class="ml-[44px] text-[50px] font-light">A</span>
            <svg class="ml-[46px] size-[46px]" viewBox="0 0 18 18" fill="none" stroke="#fff" stroke-width="1.500"><path d="M.8 6.500a11.500 11.500 0 0116.400 0M3.300 9.300a8 8 0 0111.400 0M5.800 12a4.500 4.500 0 016.400 0"/><circle cx="9" cy="15" r="1.300" fill="#fff" stroke="none"/></svg>
            <svg class="ml-[18px] size-[46px]" viewBox="0 0 18 18" fill="none" stroke="#fff" stroke-width="1.200"><path d="M1 6.500h2.800L7.500 3v12l-3.700-3.500H1zM10 6.500q1.500 2.500 0 5M12.500 4.500q3 4.500 0 9"/><path d="M14.800 2.500q4.500 6.500 0 13" stroke="#6e6e6e"/></svg>
            <svg class="ml-[18px] size-[46px]" viewBox="0 0 18 18"><rect x="1" y="5.500" width="14.500" height="10" rx="2" fill="none" stroke="#fff" stroke-width="1.200"/><path d="M2.800 14V9l4-1.700h6.900V14z" fill="#fff"/><path d="M16.500 8.500h1.200v4h-1.200zM4 0L.5 6H3l-1 5 4-6.500H3.600z" fill="#fff"/></svg>
            <div class="ml-[40px] w-[166px] text-right text-[30px] leading-[42px]"><p>23:02</p><p>2025/08/10</p></div>
        </div>
    </footer>

    <!-- Outlook options window -->
    <div class="absolute top-[367px] left-[19.48%] flex h-[1793px] w-[60.98%] flex-col rounded-[20px] border-[3px] border-[#7a7a7a] border-t-[#606060] bg-[#515151] shadow-[0_30px_90px_rgba(0,0,0,0.4)]">
        <div class="flex h-[100px] items-center pr-[48px] pb-[24px] pl-[22px] text-[#a3a3a3]">
            <span class="text-[30px]">Outlook のオプション</span>
            <button class="ml-auto" aria-label="ヘルプ">?</button>
            <button class="ml-[98px]" aria-label="閉じる"><svg class="size-[28px]"><use href="#i-close"/></svg></button>
        </div>
        <div class="flex h-[1592px]">
            <nav class="ml-[14px] flex w-[422px] flex-col rounded-[6px] border-2 border-[#b0b0b0] bg-[#bdbdbd] text-[30px] *:flex *:h-[71px] *:shrink-0 *:items-center *:pl-[34px]">
                <a href="#">全般</a>
                <a href="#" class="ml-[2px] rounded-[6px] border-2 border-[#808080] bg-[#cbcccb] pl-[30px]!">メール</a>
                <a href="#">予定表</a>
                <a href="#">連絡先</a>
                <a href="#">タスク</a>
                <a href="#">検索</a>
                <a href="#">言語</a>
                <a href="#">アクセシビリティ</a>
                <a href="#" class="mt-[12px]">詳細設定</a>
                <hr class="mx-[16px] mt-[4px] h-[2px]! border-[#808080]">
                <a href="#" class="mt-[10px]">リボンのユーザー設定</a>
                <a href="#" class="mt-[12px]">クイック アクセス ツール バー</a>
                <hr class="mx-[16px] mt-[2px] h-[2px]! border-[#808080]">
                <a href="#" class="mt-[12px]">アドイン</a>
                <a href="#">トラスト センター</a>
            </nav>
            <div class="ml-[40px] flex flex-1 flex-col pt-[212px] pr-[35px] text-[#262626] *:flex *:items-start *:justify-end *:border-t-[3px] *:border-[#6c6c6c]">
                <div class="h-[190px] pt-[28px]"><button class="h-[61px] rounded-[8px] bg-[#bdbdbd] px-[26px]">編集オプション(<u>E</u>)...</button></div>
                <div class="h-[187px] pt-[32px]"><button class="h-[61px] rounded-[8px] bg-[#bdbdbd] px-[26px]">スペル チェックとオートコレクト(<u>S</u>)...</button></div>
                <div class="h-[150px] pt-[42px]"><button class="h-[61px] rounded-[8px] bg-[#bdbdbd] px-[26px]">署名(<u>N</u>)...</button></div>
                <div class="h-[217px] pt-[42px]"><button class="h-[61px] rounded-[8px] bg-[#bdbdbd] px-[26px]">ひな形およびフォント(<u>F</u>)...</button></div>
                <div class="h-[215px] pt-[40px]"><button class="h-[61px] rounded-[8px] bg-[#bdbdbd] px-[26px]">閲覧ウィンドウ(<u>R</u>)...</button></div>
                <div class="justify-start! pt-[325px] pl-[210px] text-[28px] text-[#c4c4c4]"><label class="flex items-center gap-[16px]"><input class="size-[32px] shrink-0 appearance-none rounded-[6px] bg-[#a3a3a3]" type="checkbox"><span>権限が保護されたメッセージのプレビューを有効にする(パフォーマンスに影響を及ぼす可能性あり)(<u>R</u>)</span></label></div>
            </div>
            <div class="mr-[17px] flex w-[46px] flex-col items-center rounded-full bg-[#3b3b3b] py-[14px]">
                <svg class="size-[26px]" viewBox="0 0 16 16"><path d="M8 1l8 13H0z" fill="#c6c6c6"/></svg>
                <div class="mt-[5px] h-[379px] w-[25px] rounded-full bg-[#c3c3c3]"></div>
                <svg class="mt-auto size-[24px]" viewBox="0 0 16 16"><path d="M8 16L0 1h16z" fill="#c6c6c6"/></svg>
            </div>
        </div>
        <div class="flex justify-end gap-[27px] pt-[12px] pr-[16px] *:h-[63px] *:w-[197px] *:rounded-[8px] *:border-2 *:border-[#a8a8a8] *:bg-[#bdbdbd]">
            <button>OK</button>
            <button class="text-[30px]">キャンセル</button>
        </div>
    </div>

    <!-- Signatures and stationery window -->
    <div class="absolute top-[482px] left-[25.5%] flex h-[1499px] w-[48.95%] flex-col rounded-[20px] border-2 border-[#9a9a9a] bg-[#efefef] text-black shadow-[0_30px_90px_rgba(0,0,0,0.55)]">
        <div class="flex h-[78px] items-center rounded-t-[18px] bg-[#f3f3f3] pr-[44px] pb-[4px] pl-[24px]">
            <span class="text-[30px]">署名とひな形</span>
            <button class="ml-auto" aria-label="ヘルプ">?</button>
            <button class="ml-[94px]" aria-label="閉じる"><svg class="size-[32px]"><use href="#i-close"/></svg></button>
        </div>
        <div class="flex items-end pt-[22px] pl-[20px]">
            <button class="h-[59px] w-[134px] border-2 border-r-0 border-b-0 border-[#e4e4e4] bg-[#f2f2f2]">署名</button>
            <button class="relative -mb-[3px] h-[66px] w-[154px] border-[3px] border-b-0 border-[#e4e4e4] bg-[#fafafa] pb-[6px] text-[30px]">ひな形</button>
        </div>
        <div class="mr-[20px] ml-[15px] flex h-[1215px] flex-col border-[3px] border-[#e4e4e4] bg-[#fafafa] pr-[15px] pl-[20px]">
            <h2 class="mt-[21px] flex h-[48px] items-center gap-[14px] text-[30px] whitespace-nowrap after:h-[3px] after:flex-1 after:bg-[#dddddd]">新しい HTML メッセージで使用するテーマ</h2>
            <div class="mt-[17px] flex items-center pl-[24px]">
                <button class="h-[66px] w-[200px] rounded-[10px] border-[3px] border-[#c9d0d6] bg-white">テーマ(<u>T</u>)...</button>
                <span class="ml-[84px] text-[28px]">現在選択されているテーマはありません。</span>
            </div>
            <div class="mt-[14px] flex items-center pl-[24px] text-[#7c7c7c]">
                <label for="theme-font" class="w-[193px]">文字書式(:)</label>
                <div class="relative flex-1">
                    <select id="theme-font" class="block h-[66px] w-full appearance-none border-[3px] border-[#a5abae] bg-[#efefef] pl-[8px] text-[30px] opacity-100" disabled><option>テーマで指定された文字書式を使う</option></select>
                    <span class="absolute top-[3px] right-[3px] flex h-[60px] w-[44px] items-center justify-center border-2 border-[#cccccc] bg-white"><svg class="size-[24px]"><use href="#i-chev-down"/></svg></span>
                </div>
            </div>
            <h2 class="mt-[21px] flex h-[48px] items-center gap-[14px] text-[30px] whitespace-nowrap after:h-[3px] after:flex-1 after:bg-[#dddddd]">新しいメッセージ</h2>
            <div class="relative mt-[18px] flex items-start pl-[24px]">
                <button class="h-[66px] w-[250px] rounded-[10px] border-[3px] border-[#c9d0d6] bg-white">文字書式(<u>F</u>)...</button>
                <div class="ml-[34px] flex h-[68px] flex-1 items-center justify-between border-[3px] border-[#636363] bg-white px-[3px] text-[36px] font-light [font-feature-settings:normal] before:mt-[28px] before:h-[4px] before:w-[360px] before:bg-black after:mt-[28px] after:h-[4px] after:w-[360px] after:bg-black">サンプル</div>
                <span class="absolute -top-[28px] -left-[10px] h-[114px] w-[317px] border-[11px] border-[#ff0000]"></span>
            </div>
            <h2 class="mt-[23px] flex h-[48px] items-center gap-[14px] text-[30px] whitespace-nowrap after:h-[3px] after:flex-1 after:bg-[#dddddd]">返信/転送メッセージ</h2>
            <div class="relative mt-[18px] flex items-start pl-[24px]">
                <button class="h-[66px] w-[256px] rounded-[10px] border-[3px] border-[#d6d6d6] bg-white">文字書式(<u>O</u>)...</button>
                <div class="ml-[28px] flex h-[68px] flex-1 items-center justify-between border-[3px] border-[#636363] bg-white px-[3px] text-[36px] font-light [font-feature-settings:normal] before:mt-[28px] before:h-[4px] before:w-[360px] before:bg-black after:mt-[28px] after:h-[4px] after:w-[360px] after:bg-black">サンプル</div>
                <span class="absolute -top-[23px] -left-[7px] h-[114px] w-[317px] border-[11px] border-[#ff0000]"></span>
            </div>
            <div class="mt-[36px] flex items-center pl-[24px]">
                <label class="flex w-[428px] shrink-0 items-center gap-[10px] text-[28px]"><input class="size-[34px] shrink-0 appearance-none rounded-[7px] border-[3px] border-[#6f6f6f] bg-white" type="checkbox"><span>コメントにマークをつける(<u>M</u>):</span></label>
                <input class="h-[58px] min-w-0 flex-1 border-[3px] border-[#a9b0b0] bg-[#efefef] pl-[6px] text-[#7c7c7c] shadow-[inset_0_0_0_4px_#fafafa]" type="text" value="Imshy@hotmail.co.jp" aria-label="コメントのマーク" disabled>
            </div>
            <label class="mt-[14px] flex h-[48px] items-center gap-[12px] pl-[24px] text-[30px]"><input class="size-[34px] appearance-none rounded-[7px] border-[3px] border-[#6f6f6f] bg-white" type="checkbox"><span>返信または転送時に新しい色を適用する(<u>C</u>)</span></label>
            <h2 class="mt-[24px] flex h-[48px] items-center gap-[14px] text-[30px] whitespace-nowrap after:h-[3px] after:flex-1 after:bg-[#dddddd]">テキスト形式のメッセージの作成と読み込み</h2>
            <div class="mt-[17px] flex items-start pl-[24px]">
                <button class="h-[66px] w-[256px] rounded-[10px] border-[3px] border-[#d6d6d6] bg-white">文字書式(<u>N</u>)...</button>
                <div class="ml-[28px] flex h-[68px] flex-1 items-center justify-between border-[3px] border-[#636363] bg-white px-[3px] text-[38px] font-light [font-feature-settings:normal] before:mt-[28px] before:h-[4px] before:w-[357px] before:bg-black after:mt-[28px] after:h-[4px] after:w-[357px] after:bg-black">サンプル</div>
            </div>
            <a href="#" class="mt-auto mb-[26px] self-start text-[30px] text-[#0066cc] underline decoration-2 underline-offset-4">署名テンプレートを入手する</a>
        </div>
        <div class="flex justify-end gap-[28px] pt-[28px] pr-[17px] *:h-[67px] *:w-[197px] *:rounded-[10px] *:bg-white">
            <button class="border-[4px] border-[#0067c0] p-[4px]"><span class="flex h-full items-center justify-center border-2 border-dotted border-[#333333]">OK</span></button>
            <button class="border-[3px] border-[#d0d0d0] text-[30px]">キャンセル</button>
        </div>
    </div>
</body>
</html>
